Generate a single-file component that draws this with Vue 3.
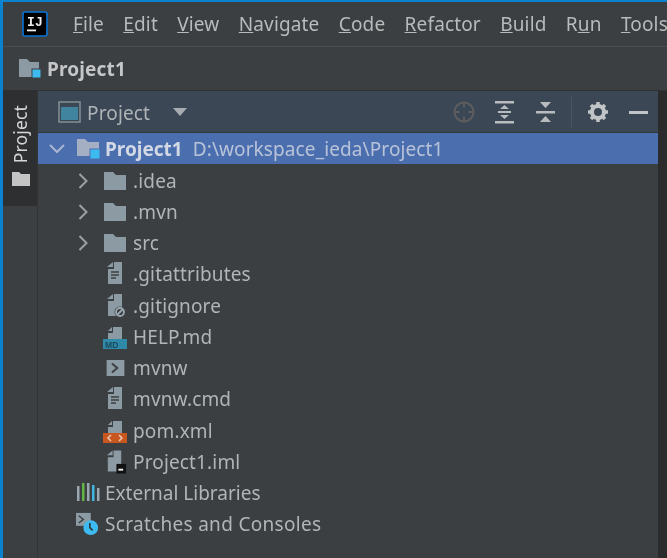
<script setup>
const menus = [
  { k: 'F', r: 'ile' }, { k: 'E', r: 'dit' }, { k: 'V', r: 'iew' }, { k: 'N', r: 'avigate' },
  { k: 'C', r: 'ode' }, { k: 'R', r: 'efactor' }, { k: 'B', r: 'uild' }, { k: 'R', r: 'un', pre: 'R', after: 'n', mid: 'u' }, { k: 'T', r: 'ools' }
]
const rows = [
  { name: '.idea', icon: 'folder', arrow: true },
  { name: '.mvn', icon: 'folder', arrow: true },
  { name: 'src', icon: 'folder', arrow: true },
  { name: '.gitattributes', icon: 'text' },
  { name: '.gitignore', icon: 'ignore' },
  { name: 'HELP.md', icon: 'md' },
  { name: 'mvnw', icon: 'shell' },
  { name: 'mvnw.cmd', icon: 'text' },
  { name: 'pom.xml', icon: 'xml' },
  { name: 'Project1.iml', icon: 'iml' }
]
</script>

<template>
  <div class="window">
    <header class="menubar">
      <svg class="logo" width="26" height="26" viewBox="0 0 26 26">
        <rect x="1" y="1" width="24" height="24" rx="2" fill="#000" stroke="#0b74d6" stroke-width="1.6" />
        <rect x="5" y="18.5" width="9" height="1.8" fill="#eee" />
        <text x="5" y="14.5" class="logo-text">IJ</text>
      </svg>
      <nav class="menus">
        <span v-for="(m, i) in menus" :key="i" class="menu">
          <template v-if="m.mid">{{ m.pre }}<u>{{ m.mid }}</u>{{ m.after }}</template>
          <template v-else><u>{{ m.k }}</u>{{ m.r }}</template>
        </span>
      </nav>
    </header>

    <div class="navbar">
      <svg width="26" height="24" viewBox="0 0 26 24">
        <path d="M1 2h8l3 3h9v15H1z" fill="#8c9aa3" />
        <rect x="14" y="12" width="9" height="9" fill="#3dbbf0" stroke="#3c3f41" stroke-width="1" />
      </svg>
      <strong>Project1</strong>
    </div>

    <div class="workspace">
      <aside class="stripe">
        <div class="stripe-tab">
          <span class="vertical">Project</span>
          <svg width="18" height="14" viewBox="0 0 18 14">
            <path d="M0 0h7l2 2h9v12H0z" fill="#c4c4c4" />
          </svg>
        </div>
      </aside>

      <main class="panel">
        <div class="toolbar">
          <svg class="panel-icon" width="23" height="22" viewBox="0 0 23 22">
            <rect x="1" y="1" width="21" height="20" fill="none" stroke="#7f8b91" stroke-width="1.6" />
            <rect x="3" y="6" width="17" height="13" fill="#40849f" />
          </svg>
          <span class="toolbar-title">Project</span>
          <svg class="caret" width="14" height="8" viewBox="0 0 14 8"><path d="M0 0h14L7 8z" fill="#a6acb0" /></svg>
          <div class="tools">
            <svg width="24" height="24" viewBox="0 0 24 24" fill="none" stroke="#5b5d5e" stroke-width="2">
              <circle cx="12" cy="12" r="9.5" />
              <path d="M12 2.5v5M12 16.500v5M2.500 12h5M16.500 12h5" />
            </svg>
            <svg class="tool-gap" width="20" height="24" viewBox="0 0 20 24" fill="#b9bcbe">
              <rect x="0" y="1" width="19" height="2.500" />
              <rect x="0" y="21" width="19" height="2.500" />
              <rect x="3" y="11" width="13" height="2" />
              <path d="M9.500 5 14 9H5zM9.500 19 5 15h9z" />
            </svg>
            <svg class="tool-gap2" width="20" height="22" viewBox="0 0 20 22" fill="#b9bcbe">
              <rect x="0" y="10" width="19" height="2.500" />
              <path d="M4 1h11l-5.500 6zM9.500 15 15 21H4z" />
            </svg>
            <span class="divider"></span>
            <svg class="gear" width="22" height="22" viewBox="0 0 22 22">
              <circle cx="11" cy="11" r="6" fill="none" stroke="#c2c5c7" stroke-width="4" />
              <path d="M11 1v20M1 11h20M4 4l14 14M18 4 4 18" stroke="#c2c5c7" stroke-width="3.500" stroke-dasharray="4 12 4" />
            </svg>
            <span class="minimize"></span>
          </div>
        </div>

        <div class="root-row">
          <svg class="chev" width="16" height="10" viewBox="0 0 16 10" fill="none" stroke="#a9b5cf" stroke-width="2"><path d="M1 1l7 7 7-7" /></svg>
          <svg width="24" height="24" viewBox="0 0 24 24">
            <path d="M0 2h8l3 3h11v14H0z" fill="#a4afc4" />
            <rect x="13" y="12" width="10" height="10" fill="#3dbbf0" stroke="#4b6eaf" stroke-width="1" />
          </svg>
          <strong>Project1</strong>
          <span class="path">D:\workspace_ieda\Project1</span>
        </div>

        <ul class="tree">
          <li v-for="r in rows" :key="r.name" class="row">
            <span class="arrow-slot">
              <svg v-if="r.arrow" width="10" height="16" viewBox="0 0 10 16" fill="none" stroke="#9da0a2" stroke-width="2"><path d="M1.500 1l7 7-7 7" /></svg>
            </span>
            <span class="icon-slot">
              <svg v-if="r.icon === 'folder'" width="22" height="18" viewBox="0 0 22 18"><path d="M0 0h9l3 3h10v15H0z" fill="#8c9aa3" /></svg>
              <svg v-else-if="r.icon === 'text'" width="18" height="24" viewBox="0 0 18 24">
                <path d="M8 0h8v22H2V7h6zM1 5l6-5v5z" fill="#8c9aa3" />
                <path d="M5 10h8M5 13h8M5 16h5" stroke="#3c3f41" stroke-width="1.500" />
              </svg>
              <svg v-else-if="r.icon === 'ignore'" width="24" height="24" viewBox="-3 0 24 24">
                <path d="M8 0h8v22H2V7h6zM1 5l6-5v5z" fill="#8c9aa3" />
                <circle cx="14" cy="18" r="5.500" fill="#3c3f41" />
                <circle cx="14" cy="18" r="4" fill="none" stroke="#9aa7b0" stroke-width="1.800" />
                <path d="M11.500 20.500l5-5" stroke="#9aa7b0" stroke-width="1.800" />
              </svg>
              <svg v-else-if="r.icon === 'md'" width="24" height="24" viewBox="0 0 24 24">
                <path d="M10 2h9v12H5V8h5zM5 6l4-4v4z" fill="#8c9aa3" />
                <rect x="0" y="14" width="24" height="10" fill="#2e8aa8" />
                <text x="2" y="22.500" class="badge-text">MD</text>
              </svg>
              <svg v-else-if="r.icon === 'shell'" width="19" height="16" viewBox="0 0 20 18">
                <rect width="20" height="18" fill="#8c9aa3" />
                <path d="M6 4l6 5-6 5" fill="none" stroke="#3c3f41" stroke-width="2.200" />
              </svg>
              <svg v-else-if="r.icon === 'xml'" width="24" height="24" viewBox="0 0 24 24">
                <path d="M10 2h9v12H5V8h5zM5 6l4-4v4z" fill="#8c9aa3" />
                <rect x="0" y="14" width="24" height="10" fill="#c8561f" />
                <path d="M8 16l-3 3 3 3M16 16l3 3-3 3" fill="none" stroke="#e9c8b4" stroke-width="1.500" />
              </svg>
              <svg v-else width="25" height="24" viewBox="-3 0 25 24">
                <path d="M8 0h8v22H2V7h6zM1 5l6-5v5z" fill="#8c9aa3" />
                <rect x="11" y="14" width="10" height="10" fill="#111" />
                <rect x="13" y="19" width="5" height="2" fill="#eee" />
              </svg>
            </span>
            <span class="name">{{ r.name }}</span>
          </li>
          <li class="row top-level">
            <svg width="24" height="22" viewBox="0 0 24 22">
              <rect x="1" y="4" width="2.500" height="15" fill="#9aa7b0" />
              <rect x="6" y="1" width="2.500" height="18" fill="#62b543" />
              <rect x="11" y="1" width="2.500" height="18" fill="#9aa7b0" />
              <rect x="16" y="3" width="2.500" height="16" fill="#40b6e0" />
              <rect x="21" y="6" width="2.500" height="13" fill="#9aa7b0" />
            </svg>
            <span class="name libs">External Libraries</span>
          </li>
          <li class="row top-level">
            <svg width="24" height="24" viewBox="0 0 26 26">
              <rect x="0" y="1" width="16" height="14" fill="#8c9aa3" />
              <path d="M3 4l5 4-5 4" fill="none" stroke="#3c3f41" stroke-width="1.500" />
              <circle cx="16" cy="17" r="8" fill="#3dbbf0" />
              <path d="M15 12v5l3 3" fill="none" stroke="#2b3a42" stroke-width="1.800" />
            </svg>
            <span class="name scratches">Scratches and Consoles</span>
          </li>
        </ul>
      </main>

      <div class="right-gutter"></div>
    </div>
  </div>
</template>

<style>
html, body { margin: 0; background: #3c3f41; }
</style>

<style scoped>
.window {
  width: 667px;
  height: 558px;
  overflow: hidden;
  display: flex;
  flex-direction: column;
  box-sizing: border-box;
  border-top: 2px solid #0a82cf;
  border-left: 3px solid #0a82cf;
  background: #3c3f41;
  color: #b2b5b7;
  font-family: "Noto Sans", "Open Sans", sans-serif;
  font-size: 19px;
  letter-spacing: 0.15px;
  filter: blur(0.35px);
}
.menubar {
  height: 44px;
  flex: none;
  display: flex;
  align-items: center;
  padding-left: 19px;
  border-bottom: 1px solid #4a4c4e;
  box-sizing: content-box;
}
.logo { flex: none; }
.logo-text { font: bold 13px "Liberation Mono", monospace; fill: #eee; }
.menus { display: flex; gap: 19.300px; margin-left: 25px; white-space: nowrap; }
.menu { color: #b8babc; }
.navbar {
  height: 44px;
  flex: none;
  display: flex;
  align-items: center;
  gap: 3px;
  padding-left: 15px;
  border-bottom: 1px solid #2f3133;
  box-sizing: border-box;
}
.navbar strong { font-size: 19px; color: #c4c6c8; font-weight: 700; }
.workspace { flex: 1; display: flex; min-height: 0; }
.stripe {
  width: 34px;
  flex: none;
  border-right: 1px solid #323436;
  box-sizing: content-box;
}
.stripe-tab {
  height: 115px;
  background: #2d2f31;
  display: flex;
  flex-direction: column;
  align-items: center;
  gap: 9px;
  padding: 14px 0 0 2px;
  box-sizing: border-box;
}
.vertical {
  writing-mode: vertical-rl;
  transform: rotate(180deg);
  font-size: 17.500px;
  color: #d4d6d8;
  line-height: 1;
}
.panel { flex: 1; min-width: 0; }
.toolbar {
  height: 42px;
  background: #3b4754;
  display: flex;
  align-items: center;
  padding: 1px 0 0 20px;
  box-sizing: border-box;
  border-bottom: 1px solid #33383e;
}
.toolbar-title { margin: 2px 0 0 6px; color: #aeb3b8; }
.caret { margin-left: 23px; }
.tools { margin-left: auto; display: flex; align-items: center; padding-right: 10px; }
.tool-gap { margin-left: 19px; }
.tool-gap2 { margin-left: 21px; }
.divider { width: 1px; height: 30px; background: #4a5560; margin-left: 15px; }
.gear { margin-left: 15px; }
.minimize { width: 19px; height: 3px; background: #c2c5c7; margin-left: 20px; }
.root-row {
  height: 31px;
  background: #4b6eaf;
  display: flex;
  align-items: center;
  padding-left: 11px;
  color: #bcc6da;
}
.chev { flex: none; margin-right: 12px; }
.root-row strong { margin-left: 4px; font-size: 19px; letter-spacing: 0; color: #d2d8e4; font-weight: 700; }
.path { margin-left: 10px; letter-spacing: 0.1px; color: #b9c3d8; white-space: nowrap; }
.tree { list-style: none; margin: 0; padding: 1px 0 0; }
.row { height: 31.250px; display: flex; align-items: center; white-space: nowrap; }
.arrow-slot { width: 65px; flex: none; display: flex; box-sizing: border-box; padding-left: 40px; }
.icon-slot { width: 24px; flex: none; display: flex; justify-content: center; margin-right: 6px; }
.name { color: #b2b5b7; }
.top-level { padding-left: 38px; gap: 5px; }
.libs { letter-spacing: 0; }
.scratches { letter-spacing: 0.3px; }
.right-gutter { width: 9px; flex: none; background: #2b2b2b; }
.badge-text { font: bold 8.500px "Liberation Sans", sans-serif; fill: #1b4a5c; }
</style>
